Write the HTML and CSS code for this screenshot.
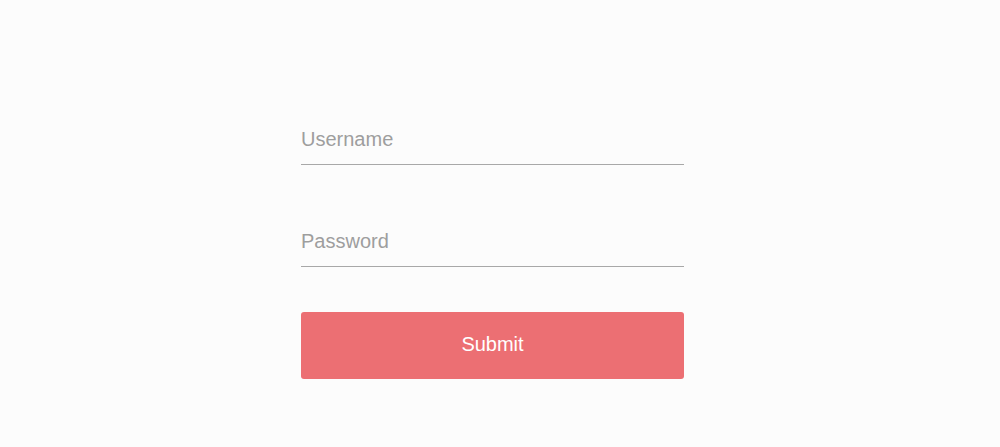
FILE: index.html
```html
<!DOCTYPE html>
<html lang="en">
<head>
	<title>Login</title>
	<meta charset="utf-8">
	<link rel="stylesheet" href="styles.css">
</head>
<body>
<form class="login" onsubmit="return false;">
	<input class="field" type="text" placeholder="Username">
	<input class="field" type="password" placeholder="Password">
	<button class="submit" type="submit">Submit</button>
</form>
</body>
</html>
```

FILE: styles.css
```css
	body {
		margin: 0;
		background-color: #FCFCFC;
		font-family: "Liberation Sans", Arial, sans-serif;
	}
	form.login {
		display: flex;
		flex-direction: column;
		width: 383px;
		margin-left: 301px;
		padding-top: 117px;
	}
	input.field {
		box-sizing: border-box;
		height: 48px;
		padding: 0 0 3px 0;
		border: none;
		border-bottom: 1px solid #A8A8A8;
		background: transparent;
		font-family: inherit;
		font-size: 20px;
		color: #555;
		outline: none;
	}
	input.field + input.field {
		margin-top: 54px;
	}
	input.field::placeholder {
		color: #9E9E9E;
	}
	button.submit {
		margin-top: 45px;
		height: 67px;
		padding: 0 0 2px 0;
		border: none;
		border-radius: 3px;
		background-color: #EC6F73;
		color: #FFFFFF;
		font-family: inherit;
		font-size: 20px;
		cursor: pointer;
	}
```
